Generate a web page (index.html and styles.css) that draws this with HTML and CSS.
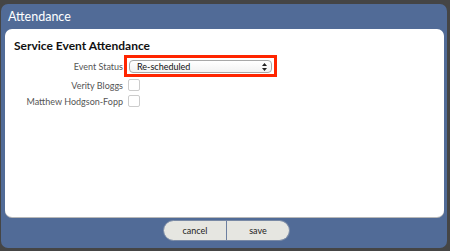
FILE: index.html
```html
<!DOCTYPE html>
<html lang="en">
<head>
    <meta charset="UTF-8">
    <meta name="viewport" content="width=device-width, initial-scale=1.0">
    <title>Attendance</title>
    <link rel="stylesheet" href="styles.css">
</head>
<body>
    <div id="dialog">
        <div id="titlebar">Attendance</div>
        <div id="content">
            <h2>Service Event Attendance</h2>
            <div class="row first">
                <label>Event Status</label>
                <div class="highlight">
                    <div class="select">
                        <span>Re-scheduled</span>
                        <svg width="5" height="8" viewBox="0 0 5 8">
                            <path d="M2.5 0 L5 3 L0 3 Z M2.5 8 L5 5 L0 5 Z" fill="#222"/>
                        </svg>
                    </div>
                </div>
            </div>
            <div class="row">
                <label>Verity Bloggs</label>
                <span class="check"></span>
            </div>
            <div class="row">
                <label>Matthew Hodgson-Fopp</label>
                <span class="check"></span>
            </div>
        </div>
        <div id="footer">
            <div class="buttons">
                <button class="left">cancel</button>
                <button class="right">save</button>
            </div>
        </div>
    </div>
</body>
</html>
```

FILE: styles.css
```css
body{
    margin: 0;
    background: #454545;
    font-family: Lato, "Open Sans", sans-serif;
    height: 251px;
    overflow: hidden;
}

#dialog{
    margin: 4px 3px 0 1px;
    height: 244px;
    background: #516b97;
    border-radius: 7px;
    display: flex;
    flex-direction: column;
}

#titlebar{
    height: 25px;
    box-sizing: border-box;
    padding: 5px 0 0 7px;
    color: #fff;
    font-size: 12.5px;
}

#content{
    height: 188px;
    margin: 0 3px 0 4px;
    background: #fff;
    border-radius: 7px;
    box-shadow: 0 1px 0 #b8b8b8;
    padding: 10px 0 0 9px;
    box-sizing: border-box;
}

h2{
    margin: 0 0 2px 0;
    height: 14px;
    line-height: 14px;
    font-size: 12px;
    font-weight: bold;
    color: #111;
}

.row{
    display: flex;
    align-items: center;
    height: 16px;
}

.row.first{
    height: 22px;
}

.row label{
    width: 110px;
    box-sizing: border-box;
    text-align: right;
    font-size: 9px;
    color: #555;
    white-space: nowrap;
    padding-right: 1px;
}

.highlight{
    border: 3px solid #ff2500;
    width: 143px;
    height: 13px;
    padding: 2px 2px 1px 2px;
}

.select{
    height: 13px;
    border: 1px solid #a8a8a8;
    border-radius: 4px;
    box-sizing: border-box;
    background: linear-gradient(#fff, #f2f2f2);
    display: flex;
    align-items: center;
    justify-content: space-between;
    padding: 0 4px 0 7px;
    font-size: 9px;
    color: #111;
}

.check{
    width: 10px;
    height: 10px;
    border: 1px solid #ccc;
    border-radius: 2px;
    margin-left: 4px;
}

#footer{
    flex: 1;
    display: flex;
    justify-content: center;
    align-items: flex-start;
    padding: 3px 0 0 5px;
}

.buttons{
    display: flex;
}

.buttons button{
    height: 21px;
    width: 64px;
    border: 1px solid #7a8aa5;
    background: #e6e6e1;
    font-family: Lato, "Open Sans", sans-serif;
    font-size: 9px;
    color: #222;
    padding: 0;
}

.buttons .left{
    border-radius: 11px 0 0 11px;
}

.buttons .right{
    border-left: 1px solid #6c7fa0;
    border-radius: 0 11px 11px 0;
    margin-left: -1px;
}
```
